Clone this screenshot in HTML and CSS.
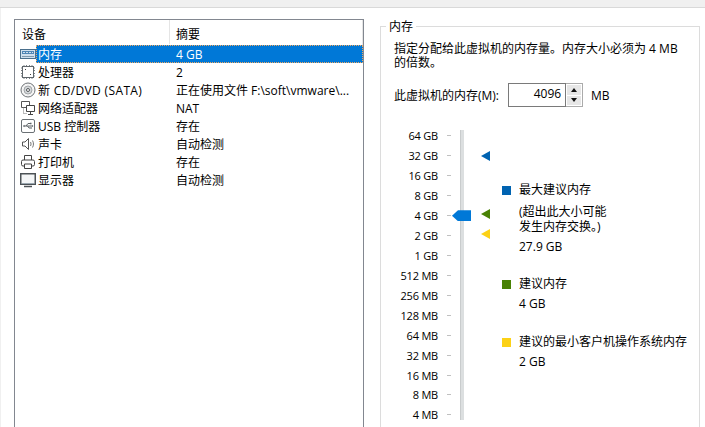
FILE: index.html
```html
<!DOCTYPE html>
<html lang="zh-CN">
<head>
    <meta charset="UTF-8">
    <meta name="viewport" content="width=device-width, initial-scale=1.0">
    <title>虚拟机设置</title>
    <link rel="stylesheet" href="styles.css">
</head>
<body>
    <div class="top-strip"></div>
    <div class="panel">
        <div class="device-list">
            <div class="list-head">
                <div class="head-name">设备</div>
                <div class="head-value">摘要</div>
            </div>

            <div class="row selected">
                <svg class="icon" viewBox="0 0 16 16"><rect x="0.5" y="3.5" width="15" height="9" fill="#cfe0ee" stroke="#4a6f8c"/><rect x="2" y="5" width="12" height="3" fill="#4f86b5"/><path d="M3 6.500h10" stroke="#cfe0ee" stroke-dasharray="2 1"/><path d="M2 10.500h12" stroke="#7f99ad"/></svg>
                <div class="row-body"><span class="name">内存</span><span class="value">4 GB</span></div>
            </div>
            <div class="row">
                <svg class="icon" viewBox="0 0 16 16"><path d="M4 1v14M6.500 1v14M9.500 1v14M12 1v14M1 4h14M1 6.500h14M1 9.500h14M1 12h14" stroke="#7b8287"/><rect x="2.500" y="2.500" width="11" height="11" fill="#fff" stroke="#5f666b"/><path d="M5 5h1v1H5zM10 10h1v1h-1z" fill="#444"/></svg>
                <div class="row-body"><span class="name">处理器</span><span class="value">2</span></div>
            </div>
            <div class="row">
                <svg class="icon" viewBox="0 0 16 16"><circle cx="8" cy="8" r="7" fill="#f4f4f4" stroke="#6f7477"/><circle cx="8" cy="8" r="4" fill="#d4d7d9" stroke="#a3a7aa"/><circle cx="8" cy="8" r="1.500" fill="#fff" stroke="#55595c"/></svg>
                <div class="row-body"><span class="name name-wide">新 CD/DVD (SATA)</span><span class="value">正在使用文件 F:\soft\vmware\...</span></div>
            </div>
            <div class="row">
                <svg class="icon" viewBox="0 0 16 16"><path d="M1.500 1.500h8v6h-8z" fill="#fff" stroke="#555"/><path d="M6.500 5.500h8v6h-8z" fill="#fff" stroke="#444"/><path d="M10.500 11.500v3M8 14.500h5" stroke="#444"/><path d="M3.500 7.500v6h3" fill="none" stroke="#777" stroke-dasharray="1 1"/></svg>
                <div class="row-body"><span class="name">网络适配器</span><span class="value">NAT</span></div>
            </div>
            <div class="row">
                <svg class="icon" viewBox="0 0 16 16"><rect x="1.500" y="1.500" width="13" height="13" rx="1.500" fill="#fff" stroke="#6a7074"/><path d="M3.500 8h9M6 8l2-2.500h2M7.500 8l1.500 2h1.500" fill="none" stroke="#5c6367"/><path d="M3 8l1.500-1.200v2.400zM10 4.800h1.500v1.400H10zM10.500 9.300h1.200v1.400h-1.200zM12 7l1.500 1-1.500 1z" fill="#5c6367"/></svg>
                <div class="row-body"><span class="name">USB 控制器</span><span class="value">存在</span></div>
            </div>
            <div class="row">
                <svg class="icon" viewBox="0 0 16 16"><path d="M2.500 6h2.500l3.500-3.500v11L5 10H2.500z" fill="#fff" stroke="#555"/><path d="M10.500 6c.7 1.300.7 2.700 0 4M12.500 4.500c1.300 2.300 1.300 4.700 0 7" fill="none" stroke="#777"/></svg>
                <div class="row-body"><span class="name">声卡</span><span class="value">自动检测</span></div>
            </div>
            <div class="row">
                <svg class="icon" viewBox="0 0 16 16"><path d="M4.500 6V1.500h7V6" fill="#fff" stroke="#444"/><rect x="1.500" y="6" width="13" height="6" rx="1.500" fill="#fff" stroke="#444"/><path d="M4.500 10v4.500h7V10z" fill="#fff" stroke="#444"/></svg>
                <div class="row-body"><span class="name">打印机</span><span class="value">存在</span></div>
            </div>
            <div class="row">
                <svg class="icon" viewBox="0 0 16 16"><rect x="0.750" y="1.750" width="14.500" height="10.500" fill="#f4f6f7" stroke="#4c5256" stroke-width="1.500"/><path d="M1.500 11.500h13" stroke="#9aa7b0"/><path d="M4 14.500h8" stroke="#4c5256" stroke-width="1.500"/></svg>
                <div class="row-body"><span class="name">显示器</span><span class="value">自动检测</span></div>
            </div>
        </div>

        <fieldset class="memory-box">
            <legend>内存</legend>
            <p class="intro">指定分配给此虚拟机的内存量。内存大小必须为 4 MB 的倍数。</p>

            <div class="mem-field">
                <span class="mem-label">此虚拟机的内存(M):</span>
                <div class="spin">
                    <div class="spin-input">4096</div>
                    <div class="spin-btns">
                        <div class="spin-btn"><span class="arrow-up"></span></div>
                        <div class="spin-btn"><span class="arrow-down"></span></div>
                    </div>
                </div>
                <span class="mem-unit">MB</span>
            </div>

            <div class="slider-area">
                <div class="scale">
                    <div class="track"></div>
                    <span class="scale-label">64 GB</span><span class="tick"></span><span></span><span></span>
                    <span class="scale-label">32 GB</span><span class="tick"></span><span></span><span class="marker marker-blue"></span>
                    <span class="scale-label">16 GB</span><span class="tick"></span><span></span><span></span>
                    <span class="scale-label">8 GB</span><span class="tick"></span><span></span><span></span>
                    <span class="scale-label">4 GB</span><span class="tick"></span><span class="thumb"></span><span class="marker marker-green"></span>
                    <span class="scale-label">2 GB</span><span class="tick"></span><span></span><span class="marker marker-yellow"></span>
                    <span class="scale-label">1 GB</span><span class="tick"></span><span></span><span></span>
                    <span class="scale-label">512 MB</span><span class="tick"></span><span></span><span></span>
                    <span class="scale-label">256 MB</span><span class="tick"></span><span></span><span></span>
                    <span class="scale-label">128 MB</span><span class="tick"></span><span></span><span></span>
                    <span class="scale-label">64 MB</span><span class="tick"></span><span></span><span></span>
                    <span class="scale-label">32 MB</span><span class="tick"></span><span></span><span></span>
                    <span class="scale-label">16 MB</span><span class="tick"></span><span></span><span></span>
                    <span class="scale-label">8 MB</span><span class="tick"></span><span></span><span></span>
                    <span class="scale-label">4 MB</span><span class="tick"></span><span></span><span></span>
                </div>

                <div class="legend-list">
                    <div class="legend-item item-max">
                        <span class="swatch swatch-blue"></span>
                        <div class="legend-text">
                            <div class="legend-title">最大建议内存</div>
                            <div class="legend-note">(超出此大小可能发生内存交换。)</div>
                            <div class="legend-size">27.9 GB</div>
                        </div>
                    </div>
                    <div class="legend-item item-rec">
                        <span class="swatch swatch-green"></span>
                        <div class="legend-text">
                            <div class="legend-title">建议内存</div>
                            <div class="legend-size">4 GB</div>
                        </div>
                    </div>
                    <div class="legend-item item-min">
                        <span class="swatch swatch-yellow"></span>
                        <div class="legend-text">
                            <div class="legend-title">建议的最小客户机操作系统内存</div>
                            <div class="legend-size">2 GB</div>
                        </div>
                    </div>
                </div>
            </div>
        </fieldset>
    </div>
</body>
</html>
```

FILE: styles.css
```css
html, body {
    margin: 0;
    height: 427px;
    overflow: hidden;
}
body {
    font-family: "Open Sans", "Noto Sans CJK SC", sans-serif;
    font-size: 12px;
    color: #000;
    background-color: #fff;
}
.top-strip {
    height: 7px;
    background-color: #f0f0f0;
    border-bottom: 1px solid #d9d9d9;
}
.panel {
    display: flex;
    height: 419px;
    border-left: 1px solid #f0f0f0;
    box-sizing: border-box;
    padding: 11px 0 0 13px;
}

/* device list */
.device-list {
    width: 350px;
    box-sizing: border-box;
    border: 1px solid #828790;
    border-bottom: none;
    flex-shrink: 0;
}
.list-head {
    display: flex;
    height: 25px;
    line-height: 29px;
}
.head-name {
    width: 147px;
    padding-left: 7px;
    border-right: 1px solid #e5e5e5;
    height: 24px;
}
.head-value {
    padding-left: 6px;
    flex: 1;
    border-right: 1px solid #e5e5e5;
}
.row {
    display: flex;
    align-items: center;
    height: 18px;
    padding-left: 5px;
}
.icon {
    width: 16px;
    height: 16px;
    flex-shrink: 0;
}
.row-body {
    display: flex;
    flex: 1;
    height: 18px;
    line-height: 17px;
    box-sizing: border-box;
    padding-left: 1px;
    border: 1px dotted transparent;
}
.name {
    width: 138px;
    white-space: nowrap;
}
.name-wide {
    letter-spacing: 0.35px;
}
.value {
    white-space: nowrap;
}
.selected .row-body {
    background-color: #0078d7;
    color: #fff;
    border-color: #f0a860;
}

/* memory group */
.memory-box {
    width: 320px;
    height: 420px;
    box-sizing: border-box;
    margin: 0 0 0 16px;
    padding: 0 0 0 13px;
    border: 1px solid #dcdcdc;
    border-bottom: none;
    min-width: 0;
}
.memory-box legend {
    padding: 0 3px;
    margin-left: -8px;
    line-height: 15px;
}
.intro {
    margin: 0;
    width: 290px;
    line-height: 14px;
    padding-top: 8px;
}
.mem-field {
    display: flex;
    align-items: center;
    margin-top: 13px;
    height: 24px;
}
.mem-label {
    width: 114px;
}
.spin {
    display: flex;
    height: 24px;
    width: 75px;
}
.spin-input {
    width: 59px;
    box-sizing: border-box;
    border: 1px solid #7a7a7a;
    text-align: right;
    padding-right: 4px;
    line-height: 19px;
}
.spin-btns {
    width: 17px;
    box-sizing: border-box;
    border: 1px solid #ababab;
    border-left: none;
    display: flex;
    flex-direction: column;
    gap: 1px;
    padding: 1px;
}
.spin-btn {
    flex: 1;
    background-color: #e6e6e6;
    display: flex;
    align-items: center;
    justify-content: center;
}
.arrow-up {
    border: 3px solid transparent;
    border-top: none;
    border-bottom: 4px solid #111;
}
.arrow-down {
    border: 3px solid transparent;
    border-bottom: none;
    border-top: 4px solid #111;
}
.mem-unit {
    margin-left: 8px;
    font-size: 12px;
}

/* slider */
.slider-area {
    display: flex;
    margin-top: 19px;
}
.scale {
    position: relative;
    display: grid;
    grid-template-columns: 44px 24px 19px 12px;
    grid-auto-rows: 19.93px;
    align-items: center;
    height: 299px;
}
.scale-label {
    text-align: right;
    font-size: 11px;
    letter-spacing: -0.2px;
    white-space: nowrap;
}
.tick {
    justify-self: start;
    margin-left: 9px;
    width: 4px;
    height: 1px;
    background-color: #c0c0c0;
}
.track {
    position: absolute;
    left: 66px;
    top: 4px;
    width: 4px;
    height: 290px;
    background-color: #dcdfe0;
    border-left: 1px solid #c9cccd;
    box-sizing: border-box;
}
.thumb {
    position: relative;
    margin-left: -10px;
    width: 19px;
    height: 11px;
    background-color: #0078d7;
    clip-path: polygon(0 50%, 6px 0, 100% 0, 100% 100%, 6px 100%);
}
.marker {
    width: 0;
    height: 0;
    border-top: 5px solid transparent;
    border-bottom: 5px solid transparent;
    border-right-width: 9px;
    border-right-style: solid;
}
.marker-blue {
    border-right-color: #0063b1;
}
.marker-green {
    border-right-color: #498205;
    margin-bottom: 3px;
}
.marker-yellow {
    border-right-color: #fcd116;
    margin-bottom: 3px;
}

/* legend */
.legend-list {
    margin-left: 9px;
}
.legend-item {
    display: flex;
    gap: 8px;
}
.item-max {
    margin-top: 57px;
}
.item-rec {
    margin-top: 23px;
}
.item-min {
    margin-top: 24px;
}
.swatch {
    width: 9px;
    height: 9px;
    margin-top: 3px;
    flex-shrink: 0;
}
.swatch-blue {
    background-color: #0063b1;
}
.swatch-green {
    background-color: #498205;
}
.swatch-yellow {
    background-color: #fcd116;
}
.legend-title {
    line-height: 14px;
    white-space: nowrap;
}
.legend-note {
    width: 92px;
    margin-top: 7px;
    line-height: 15px;
}
.legend-size {
    margin-top: 6px;
    line-height: 14px;
}
```
